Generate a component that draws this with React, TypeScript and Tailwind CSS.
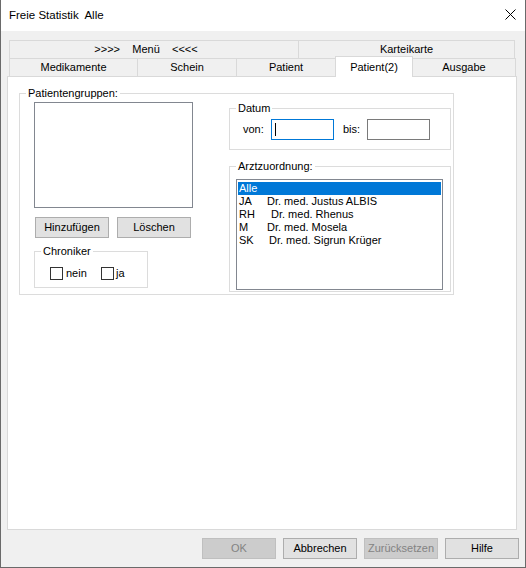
import React from "react";

const F = { fontFamily: '"Liberation Sans", Arial, sans-serif' };

function Tab({ w, label, cls = "" }: { w: string; label: string; cls?: string }) {
  return (
    <div className={`${w} h-full -ml-px first:ml-0 border border-b-0 border-[#d9d9d9] bg-[#f0f0f0] flex items-center justify-center ${cls}`}>
      <span className="whitespace-pre">{label}</span>
    </div>
  );
}

function Btn({ label, disabled, w = "w-[74px]", cls = "" }: { label: string; disabled?: boolean; w?: string; cls?: string }) {
  return (
    <div
      className={`${w} h-[21px] flex items-center justify-center border ${
        disabled ? "bg-[#cccccc] border-[#bfbfbf] text-[#838383]" : "bg-[#e1e1e1] border-[#adadad] text-black"
      } ${cls}`}
    >
      {label}
    </div>
  );
}

function Group({ label, cls, children }: { label: string; cls: string; children?: React.ReactNode }) {
  return (
    <div className={`relative border border-[#dcdcdc] ${cls}`}>
      <span className="absolute -top-[8px] left-[6px] bg-white px-[2px] leading-[14px] text-[#000]">{label}</span>
      {children}
    </div>
  );
}

export default function App() {
  const doctors = [
    { c: "JA", n: "Dr. med. Justus ALBIS", p: "pl-0" },
    { c: "RH", n: "Dr. med. Rhenus", p: "pl-[4px]" },
    { c: "M", n: "Dr. med. Mosela", p: "pl-0" },
    { c: "SK", n: "Dr. med. Sigrun Krüger", p: "pl-[2px]" },
  ];
  return (
    <div style={F} className="w-[526px] h-[568px] bg-[#f0f0f0] border-x border-b border-[#6a6a6a] flex flex-col text-[11px] text-black">
      {/* title bar */}
      <div className="h-[31px] shrink-0 bg-white flex items-center justify-between pl-[8px] pr-[9px]">
        <span className="text-[11.5px] whitespace-pre text-black">Freie Statistik  Alle</span>
        <svg width="11" height="11" viewBox="0 0 11 11" className="mt-[-2px]">
          <path d="M0.5 0.5 L10.5 10.5 M10.5 0.5 L0.5 10.5" stroke="#000" strokeWidth="1" />
        </svg>
      </div>

      {/* tabs */}
      <div className="mt-[9px] ml-[8px] flex flex-col">
        <div className="flex h-[18px]">
          <Tab w="w-[290px]" label={">>>>    Menü    <<<<"} cls="pr-[16px]" />
          <Tab w="w-[217px]" label="Karteikarte" />
        </div>
        <div className="flex h-[18px] items-end">
          <Tab w="w-[129px]" label="Medikamente" />
          <Tab w="w-[100px]" label="Schein" />
          <Tab w="w-[100px]" label="Patient" />
          <div className="relative z-10 -ml-px w-[78px] h-[21px] -mb-[1px] self-end border border-b-0 border-[#d9d9d9] bg-white flex items-start justify-center pt-[2px]">
            <span>Patient(2)</span>
          </div>
          <Tab w="w-[104px]" label="Ausgabe" />
        </div>
      </div>

      {/* panel */}
      <div className="ml-[6px] w-[510px] h-[454px] shrink-0 bg-white border border-[#d9d9d9] flex flex-col">
        <Group label="Patientengruppen:" cls="ml-[11px] mt-[16px] w-[435px] h-[202px]">
          <div className="flex items-start">
            {/* left column */}
            <div className="ml-[14px] mt-[8px] w-[159px] flex flex-col">
              <div className="w-[159px] h-[106px] border border-[#828790] bg-white" />
              <div className="flex mt-[9px]">
                <Btn label="Hinzufügen" cls="ml-[1px]" />
                <Btn label="Löschen" cls="ml-[8px]" />
              </div>
              <Group label="Chroniker" cls="mt-[13px] w-[114px] h-[37px]">
                <div className="flex items-center mt-[15px] pl-[15px] leading-[13px]">
                  <div className="w-[51px] flex items-center">
                    <div className="w-[13px] h-[13px] border border-[#333333] bg-white" />
                    <span className="ml-[3px]">nein</span>
                  </div>
                  <div className="flex items-center">
                    <div className="w-[13px] h-[13px] border border-[#333333] bg-white" />
                    <span className="ml-[2px]">ja</span>
                  </div>
                </div>
              </Group>
            </div>

            {/* right column */}
            <div className="ml-[36px] w-[222px] flex flex-col">
              <Group label="Datum" cls="mt-[14px] w-[222px] h-[42px]">
                <div className="flex items-center mt-[10px] pl-[13px]">
                  <span className="w-[28px]">von:</span>
                  <div className="w-[63px] h-[21px] border border-[#0078d7] bg-white flex items-center pl-[3px]">
                    <div className="w-px h-[13px] bg-black" />
                  </div>
                  <span className="ml-[9px] w-[24px]">bis:</span>
                  <div className="w-[63px] h-[21px] border border-[#7a7a7a] bg-white" />
                </div>
              </Group>
              <Group label="Arztzuordnung:" cls="mt-[16px] w-[222px] h-[126px]">
                <div className="ml-[6px] mt-[12px] w-[207px] h-[111px] border border-[#828790] bg-white pt-[2px] px-[1px] leading-[13px]">
                  <div className="h-[13px] bg-[#0078d7] text-white pl-[1px]">Alle</div>
                  {doctors.map((d) => (
                    <div key={d.c} className="h-[13px] flex pl-[1px]">
                      <span className="w-[28px]">{d.c}</span>
                      <span className={d.p}>{d.n}</span>
                    </div>
                  ))}
                </div>
              </Group>
            </div>
          </div>
        </Group>
      </div>

      {/* bottom buttons */}
      <div className="mt-[8px] flex justify-end gap-[7px] pr-[6px]">
        <Btn label="OK" disabled />
        <Btn label="Abbrechen" />
        <Btn label="Zurücksetzen" disabled />
        <Btn label="Hilfe" />
      </div>
    </div>
  );
}
